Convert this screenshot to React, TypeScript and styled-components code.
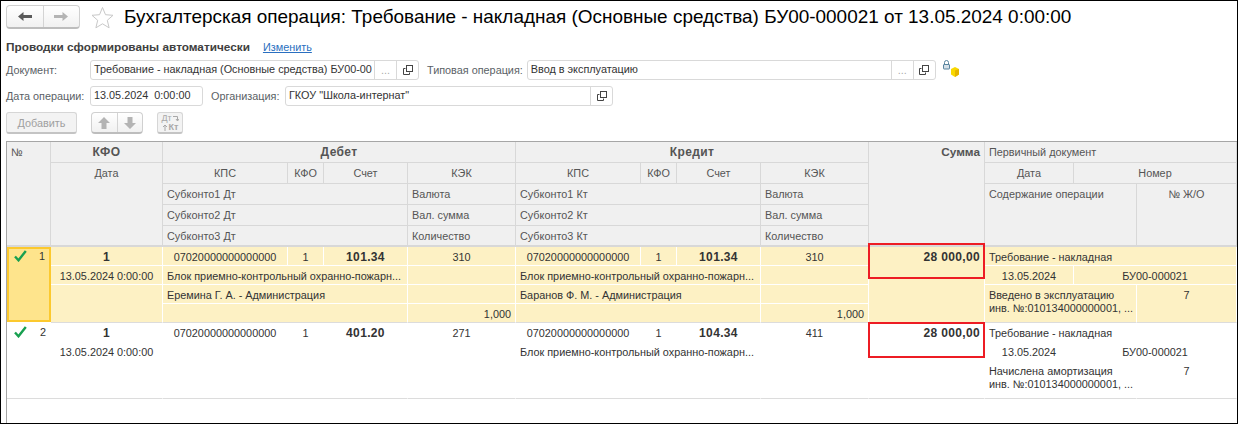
import React from "react";
import styled, { createGlobalStyle } from "styled-components";

const Global = createGlobalStyle`
  html, body { margin: 0; padding: 0; background: #fff; }
  body { font-family: "Liberation Sans", Arial, sans-serif; font-size: 10.85px; color: #333; }
`;

const Frame = styled.div`
  box-sizing: border-box;
  width: 1238px;
  height: 424px;
  border: 1px solid #000;
  padding: 4px 0 0 5px;
  display: flex;
  flex-direction: column;
  overflow: hidden;
`;

const TitleBar = styled.div`
  display: flex;
  align-items: center;
  height: 24px;
`;

const BtnGroup = styled.div<{ $w: number; $h: number; $left?: number }>`
  box-sizing: border-box;
  width: ${(p) => p.$w}px;
  height: ${(p) => p.$h}px;
  margin-left: ${(p) => p.$left ?? 0}px;
  display: flex;
  border: 1px solid #d0d0d0;
  border-bottom: 2px solid #bdbdbd;
  border-radius: 4px;
  background: linear-gradient(#fff, #f1f1f1);
`;

const BtnPart = styled.div`
  flex: 1;
  display: flex;
  align-items: center;
  justify-content: center;
  & + & { border-left: 1px solid #d4d4d4; }
`;

const StarWrap = styled.div`
  display: flex;
  margin-left: 11px;
  margin-right: 10px;
`;

const Title = styled.h1`
  margin: 0;
  font-size: 18.96px;
  font-weight: 400;
  color: #000;
  white-space: nowrap;
`;

const StatusRow = styled.div`
  display: flex;
  align-items: center;
  gap: 13px;
  height: 20px;
  margin-top: 8px;
`;

const StatusText = styled.span`
  font-size: 11.8px;
  font-weight: 700;
  color: #404040;
`;

const LinkText = styled.a`
  color: #2a6fc0;
  text-decoration: underline;
`;

const FormRow = styled.div<{ $top: number }>`
  display: flex;
  align-items: center;
  margin-top: ${(p) => p.$top}px;
`;

const Label = styled.span<{ $w?: number; $left?: number }>`
  width: ${(p) => (p.$w ? `${p.$w}px` : "auto")};
  margin-left: ${(p) => p.$left ?? 0}px;
  margin-right: 4px;
  color: #5a5f66;
  white-space: nowrap;
`;

const Field = styled.div<{ $w: number }>`
  box-sizing: border-box;
  width: ${(p) => p.$w}px;
  height: 20px;
  display: flex;
  border: 1px solid #d9d9d9;
  border-radius: 3px;
  background: #fff;
`;

const FieldText = styled.div`
  flex: 1;
  min-width: 0;
  padding-left: 3px;
  line-height: 17px;
  color: #333;
  white-space: nowrap;
  overflow: hidden;
`;

const FieldBtn = styled.div`
  width: 21px;
  flex: none;
  display: flex;
  align-items: center;
  justify-content: center;
  border-left: 1px solid #d9d9d9;
  color: #aaa;
  line-height: 14px;
`;

const LockWrap = styled.div`
  display: flex;
  align-self: flex-start;
  margin-left: 6px;
`;

const AddBtn = styled.div`
  box-sizing: border-box;
  width: 71px;
  height: 22px;
  display: flex;
  align-items: center;
  justify-content: center;
  border: 1px solid #d6d6d6;
  border-bottom: 2px solid #c4c4c4;
  border-radius: 3px;
  background: #f3f3f3;
  color: #a0a0a0;
`;

const DtKtBtn = styled.div`
  box-sizing: border-box;
  width: 26px;
  height: 22px;
  margin-left: 14px;
  display: flex;
  flex-direction: column;
  align-items: center;
  justify-content: center;
  border: 1px solid #d6d6d6;
  border-bottom: 2px solid #c4c4c4;
  border-radius: 3px;
  background: #f3f3f3;
  font-size: 9px;
  line-height: 9px;
  color: #a8a8a8;
`;

const DtKtLine = styled.span<{ $bold?: boolean }>`
  display: flex;
  align-items: center;
  gap: 1px;
  font-weight: ${(p) => (p.$bold ? 700 : 400)};
`;

const Table = styled.div`
  flex: 1;
  margin-top: 7px;
  border-top: 1px solid #a6a6a6;
  border-left: 1px solid #a6a6a6;
  display: grid;
  grid-template-columns: 44px 112px 125px 36px 84px 108px 125px 36px 84px 108px 116px 89px 63px 1fr;
  grid-template-rows: repeat(5, 21px) repeat(8, 19px);
  align-content: start;
`;

type CellProps = {
  $c: number;
  $cs?: number;
  $r: number;
  $rs?: number;
  $align?: "left" | "center" | "right";
  $bold?: boolean;
};

const Cell = styled.div<CellProps>`
  box-sizing: border-box;
  position: relative;
  grid-column: ${(p) => p.$c} / span ${(p) => p.$cs ?? 1};
  grid-row: ${(p) => p.$r} / span ${(p) => p.$rs ?? 1};
  padding: 0 4px;
  text-align: ${(p) => p.$align ?? "left"};
  font-weight: ${(p) => (p.$bold ? 700 : 400)};
  font-size: ${(p) => (p.$bold ? "12px" : "inherit")};
  letter-spacing: ${(p) => (p.$bold ? "0.35px" : "normal")};
  white-space: nowrap;
`;

const HeadCell = styled(Cell)`
  background: #f0f0f0;
  border-right: 1px solid #d8d8d8;
  border-bottom: 1px solid #d8d8d8;
  color: #555;
  line-height: 20px;
`;

const HeadLast = styled(HeadCell)`
  border-bottom: 2px solid #d8d8d8;
`;

const SumHead = styled(HeadLast)`
  font-size: 11.8px;
  letter-spacing: normal;
`;

const DataCell = styled(Cell)<{ $active: boolean; $end?: boolean }>`
  background: ${(p) => (p.$active ? "#fdf1c4" : "#fff")};
  border-right: 1px solid #fff;
  border-bottom: 1px solid ${(p) => (p.$end ? "#dcdcdc" : "#fff")};
  color: #333;
  line-height: 20px;
`;

const WrapText = styled.div`
  padding-top: 4px;
  line-height: 13px;
  white-space: pre;
`;

const NumCell = styled.div<{ $r: number; $active: boolean }>`
  box-sizing: border-box;
  grid-column: 1;
  grid-row: ${(p) => p.$r} / span 4;
  display: flex;
  justify-content: space-between;
  align-items: flex-start;
  padding: ${(p) => (p.$active ? "1px 4px 0 5px" : "3px 5px 0 7px")};
  line-height: 13px;
  color: #333;
  background: ${(p) => (p.$active ? "#fee48c" : "#fff")};
  border: ${(p) => (p.$active ? "2px solid #fcc92e" : "none")};
  border-bottom: ${(p) => (p.$active ? "2px solid #fcc92e" : "1px solid #dcdcdc")};
  margin-bottom: ${(p) => (p.$active ? 1 : 0)}px;
`;

const RedBox = styled.div<{ $top: number }>`
  position: absolute;
  left: -1px;
  top: ${(p) => p.$top}px;
  width: 117px;
  height: 36px;
  box-sizing: border-box;
  border: 2px solid #ed1c24;
`;

const NavArrow = ({ dir, color }: { dir: "left" | "right"; color: string }) => (
  <svg width="14" height="9" viewBox="0 0 14 9">
    <path
      d={dir === "left" ? "M0 4.500 5.500 0v3H14v3H5.500v3z" : "M14 4.500 8.500 0v3H0v3h8.500v3z"}
      fill={color}
    />
  </svg>
);

const VArrow = ({ dir }: { dir: "up" | "down" }) => (
  <svg width="12" height="12" viewBox="0 0 12 12">
    <path
      d={dir === "up" ? "M6 0 12 6H8.500v6h-5V6H0z" : "M6 12 12 6H8.500V0h-5v6H0z"}
      fill="#b4b4b4"
    />
  </svg>
);

const Star = () => (
  <svg width="23" height="23" viewBox="0 0 23 23">
    <path
      d="M11.500 1.500 14.500 8.700 22 9.300 16.300 14.300 18.100 21.800 11.500 17.800 4.900 21.800 6.700 14.300 1 9.300 8.500 8.700z"
      fill="#fff"
      stroke="#c8c8c8"
    />
  </svg>
);

const CopyIcon = () => (
  <svg width="10" height="10" viewBox="0 0 10 10">
    <rect x="3.500" y="0.500" width="6" height="6" fill="none" stroke="#444" />
    <path d="M2.500 3.500H.5v6h6v-2" fill="none" stroke="#444" />
  </svg>
);

const LockIcon = () => (
  <svg width="18" height="17" viewBox="0 0 18 17">
    <path d="M2.500 4V2.500a2 2 0 0 1 4 0V4" fill="none" stroke="#58849e" />
    <rect x="1.500" y="4.500" width="6" height="4.500" rx="0.500" fill="#d5e0e8" stroke="#58849e" />
    <path d="M13 7 17 9v5.500L13 17l-4-2.500V9z" fill="#f9d800" />
    <path d="M13 10.500V17l4-2.500V9z" fill="#e4b400" />
  </svg>
);

const Check = () => (
  <svg width="13" height="12" viewBox="0 0 13 12">
    <path d="M1 6.500 4.500 10.300 11.800 1" fill="none" stroke="#18a050" strokeWidth="2.400" />
  </svg>
);

const MiniArrow = ({ d }: { d: string }) => (
  <svg width="6" height="7" viewBox="0 0 6 7">
    <path d={d} fill="none" stroke="#a8a8a8" />
  </svg>
);

type Ledger = {
  no: number;
  active: boolean;
  debitAcc: string;
  creditAcc: string;
  debitKek: string;
  creditKek: string;
  debitSub1?: string;
  debitSub2?: string;
  creditSub2?: string;
  qty?: string;
  text: string;
};

const BLOCK = "Блок приемно-контрольный охранно-пожарн...";

const ledgers: Ledger[] = [
  {
    no: 1,
    active: true,
    debitAcc: "101.34",
    creditAcc: "101.34",
    debitKek: "310",
    creditKek: "310",
    debitSub1: BLOCK,
    debitSub2: "Еремина Г. А. - Администрация",
    creditSub2: "Баранов Ф. М. - Администрация",
    qty: "1,000",
    text: "Введено в эксплуатацию\nинв. №:010134000000001, ...",
  },
  {
    no: 2,
    active: false,
    debitAcc: "401.20",
    creditAcc: "104.34",
    debitKek: "271",
    creditKek: "411",
    text: "Начислена амортизация\nинв. №:010134000000001, ...",
  },
];

const CODE = "07020000000000000";
const DATE = "13.05.2024 0:00:00";

function HeaderSide({ start, side, title }: { start: number; side: string; title: string }) {
  return (
    <>
      <HeadCell $c={start} $cs={4} $r={1} $align="center" $bold>
        {title}
      </HeadCell>
      <HeadCell $c={start} $r={2} $align="center">КПС</HeadCell>
      <HeadCell $c={start + 1} $r={2} $align="center">КФО</HeadCell>
      <HeadCell $c={start + 2} $r={2} $align="center">Счет</HeadCell>
      <HeadCell $c={start + 3} $r={2} $align="center">КЭК</HeadCell>
      <HeadCell $c={start} $cs={3} $r={3}>Субконто1 {side}</HeadCell>
      <HeadCell $c={start + 3} $r={3}>Валюта</HeadCell>
      <HeadCell $c={start} $cs={3} $r={4}>Субконто2 {side}</HeadCell>
      <HeadCell $c={start + 3} $r={4}>Вал. сумма</HeadCell>
      <HeadLast $c={start} $cs={3} $r={5}>Субконто3 {side}</HeadLast>
      <HeadLast $c={start + 3} $r={5}>Количество</HeadLast>
    </>
  );
}

function LedgerSide(props: {
  start: number;
  r: number;
  active: boolean;
  acc: string;
  kek: string;
  sub1?: string;
  sub2?: string;
  qty?: string;
}) {
  const { start, r, active, acc, kek, sub1, sub2, qty } = props;
  return (
    <>
      <DataCell $active={active} $c={start} $r={r} $align="center">{CODE}</DataCell>
      <DataCell $active={active} $c={start + 1} $r={r} $align="center">1</DataCell>
      <DataCell $active={active} $c={start + 2} $r={r} $align="center" $bold>{acc}</DataCell>
      <DataCell $active={active} $c={start + 3} $r={r} $align="center">{kek}</DataCell>
      <DataCell $active={active} $c={start} $cs={3} $r={r + 1}>{sub1}</DataCell>
      <DataCell $active={active} $c={start + 3} $r={r + 1} />
      <DataCell $active={active} $c={start} $cs={3} $r={r + 2}>{sub2}</DataCell>
      <DataCell $active={active} $c={start + 3} $r={r + 2} />
      <DataCell $active={active} $end $c={start} $cs={3} $r={r + 3} />
      <DataCell $active={active} $end $c={start + 3} $r={r + 3} $align="right">{qty}</DataCell>
    </>
  );
}

export default function App() {
  return (
    <Frame>
      <Global />
      <TitleBar>
        <BtnGroup $w={74} $h={24}>
          <BtnPart><NavArrow dir="left" color="#5a5a5a" /></BtnPart>
          <BtnPart><NavArrow dir="right" color="#b4b4b4" /></BtnPart>
        </BtnGroup>
        <StarWrap><Star /></StarWrap>
        <Title>Бухгалтерская операция: Требование - накладная (Основные средства) БУ00-000021 от 13.05.2024 0:00:00</Title>
      </TitleBar>
      <StatusRow>
        <StatusText>Проводки сформированы автоматически</StatusText>
        <LinkText>Изменить</LinkText>
      </StatusRow>
      <FormRow $top={3}>
        <Label $w={80}>Документ:</Label>
        <Field $w={329}>
          <FieldText>Требование - накладная (Основные средства) БУ00-00</FieldText>
          <FieldBtn>...</FieldBtn>
          <FieldBtn><CopyIcon /></FieldBtn>
        </Field>
        <Label $left={8}>Типовая операция:</Label>
        <Field $w={409}>
          <FieldText>Ввод в эксплуатацию</FieldText>
          <FieldBtn>...</FieldBtn>
          <FieldBtn><CopyIcon /></FieldBtn>
        </Field>
        <LockWrap><LockIcon /></LockWrap>
      </FormRow>
      <FormRow $top={6}>
        <Label $w={80}>Дата операции:</Label>
        <Field $w={113}>
          <FieldText>13.05.2024&nbsp;&nbsp;0:00:00</FieldText>
        </Field>
        <Label $left={8} $w={70}>Организация:</Label>
        <Field $w={328}>
          <FieldText>ГКОУ "Школа-интернат"</FieldText>
          <FieldBtn><CopyIcon /></FieldBtn>
        </Field>
      </FormRow>
      <FormRow $top={6}>
        <AddBtn>Добавить</AddBtn>
        <BtnGroup $w={52} $h={22} $left={14}>
          <BtnPart><VArrow dir="up" /></BtnPart>
          <BtnPart><VArrow dir="down" /></BtnPart>
        </BtnGroup>
        <DtKtBtn>
          <DtKtLine>Дт<MiniArrow d="M0 1.500h4.500v4M3 4l1.500 2L6 4" /></DtKtLine>
          <DtKtLine $bold><MiniArrow d="M3 7V1M1 3l2-2 2 2" />Кт</DtKtLine>
        </DtKtBtn>
      </FormRow>
      <Table>
        <HeadLast $c={1} $r={1} $rs={5}>№</HeadLast>
        <HeadCell $c={2} $r={1} $align="center" $bold>КФО</HeadCell>
        <HeadLast $c={2} $r={2} $rs={4} $align="center">Дата</HeadLast>
        <HeaderSide start={3} side="Дт" title="Дебет" />
        <HeaderSide start={7} side="Кт" title="Кредит" />
        <SumHead $c={11} $r={1} $rs={5} $align="right" $bold>Сумма</SumHead>
        <HeadCell $c={12} $cs={3} $r={1}>Первичный документ</HeadCell>
        <HeadCell $c={12} $r={2} $align="center">Дата</HeadCell>
        <HeadCell $c={13} $cs={2} $r={2} $align="center">Номер</HeadCell>
        <HeadLast $c={12} $cs={2} $r={3} $rs={3}>Содержание операции</HeadLast>
        <HeadLast $c={14} $r={3} $rs={3} $align="center">№ Ж/О</HeadLast>
        {ledgers.map((l, i) => {
          const r = 6 + i * 4;
          return (
            <React.Fragment key={l.no}>
              <NumCell $r={r} $active={l.active}>
                <Check />
                <span>{l.no}</span>
              </NumCell>
              <DataCell $active={l.active} $c={2} $r={r} $align="center" $bold>1</DataCell>
              <DataCell $active={l.active} $c={2} $r={r + 1} $align="center">{DATE}</DataCell>
              <DataCell $active={l.active} $end $c={2} $r={r + 2} $rs={2} />
              <LedgerSide
                start={3}
                r={r}
                active={l.active}
                acc={l.debitAcc}
                kek={l.debitKek}
                sub1={l.debitSub1}
                sub2={l.debitSub2}
                qty={l.qty}
              />
              <LedgerSide
                start={7}
                r={r}
                active={l.active}
                acc={l.creditAcc}
                kek={l.creditKek}
                sub1={BLOCK}
                sub2={l.creditSub2}
                qty={l.qty}
              />
              <DataCell $active={l.active} $end $c={11} $r={r} $rs={4} $align="right" $bold>
                28 000,00
                <RedBox $top={l.active ? -4 : -1} />
              </DataCell>
              <DataCell $active={l.active} $c={12} $cs={3} $r={r}>Требование - накладная</DataCell>
              <DataCell $active={l.active} $c={12} $r={r + 1} $align="center">13.05.2024</DataCell>
              <DataCell $active={l.active} $c={13} $cs={2} $r={r + 1} $align="center">БУ00-000021</DataCell>
              <DataCell $active={l.active} $end $c={12} $cs={2} $r={r + 2} $rs={2}>
                <WrapText>{l.text}</WrapText>
              </DataCell>
              <DataCell $active={l.active} $end $c={14} $r={r + 2} $rs={2} $align="center">
                <WrapText>7</WrapText>
              </DataCell>
            </React.Fragment>
          );
        })}
      </Table>
    </Frame>
  );
}
